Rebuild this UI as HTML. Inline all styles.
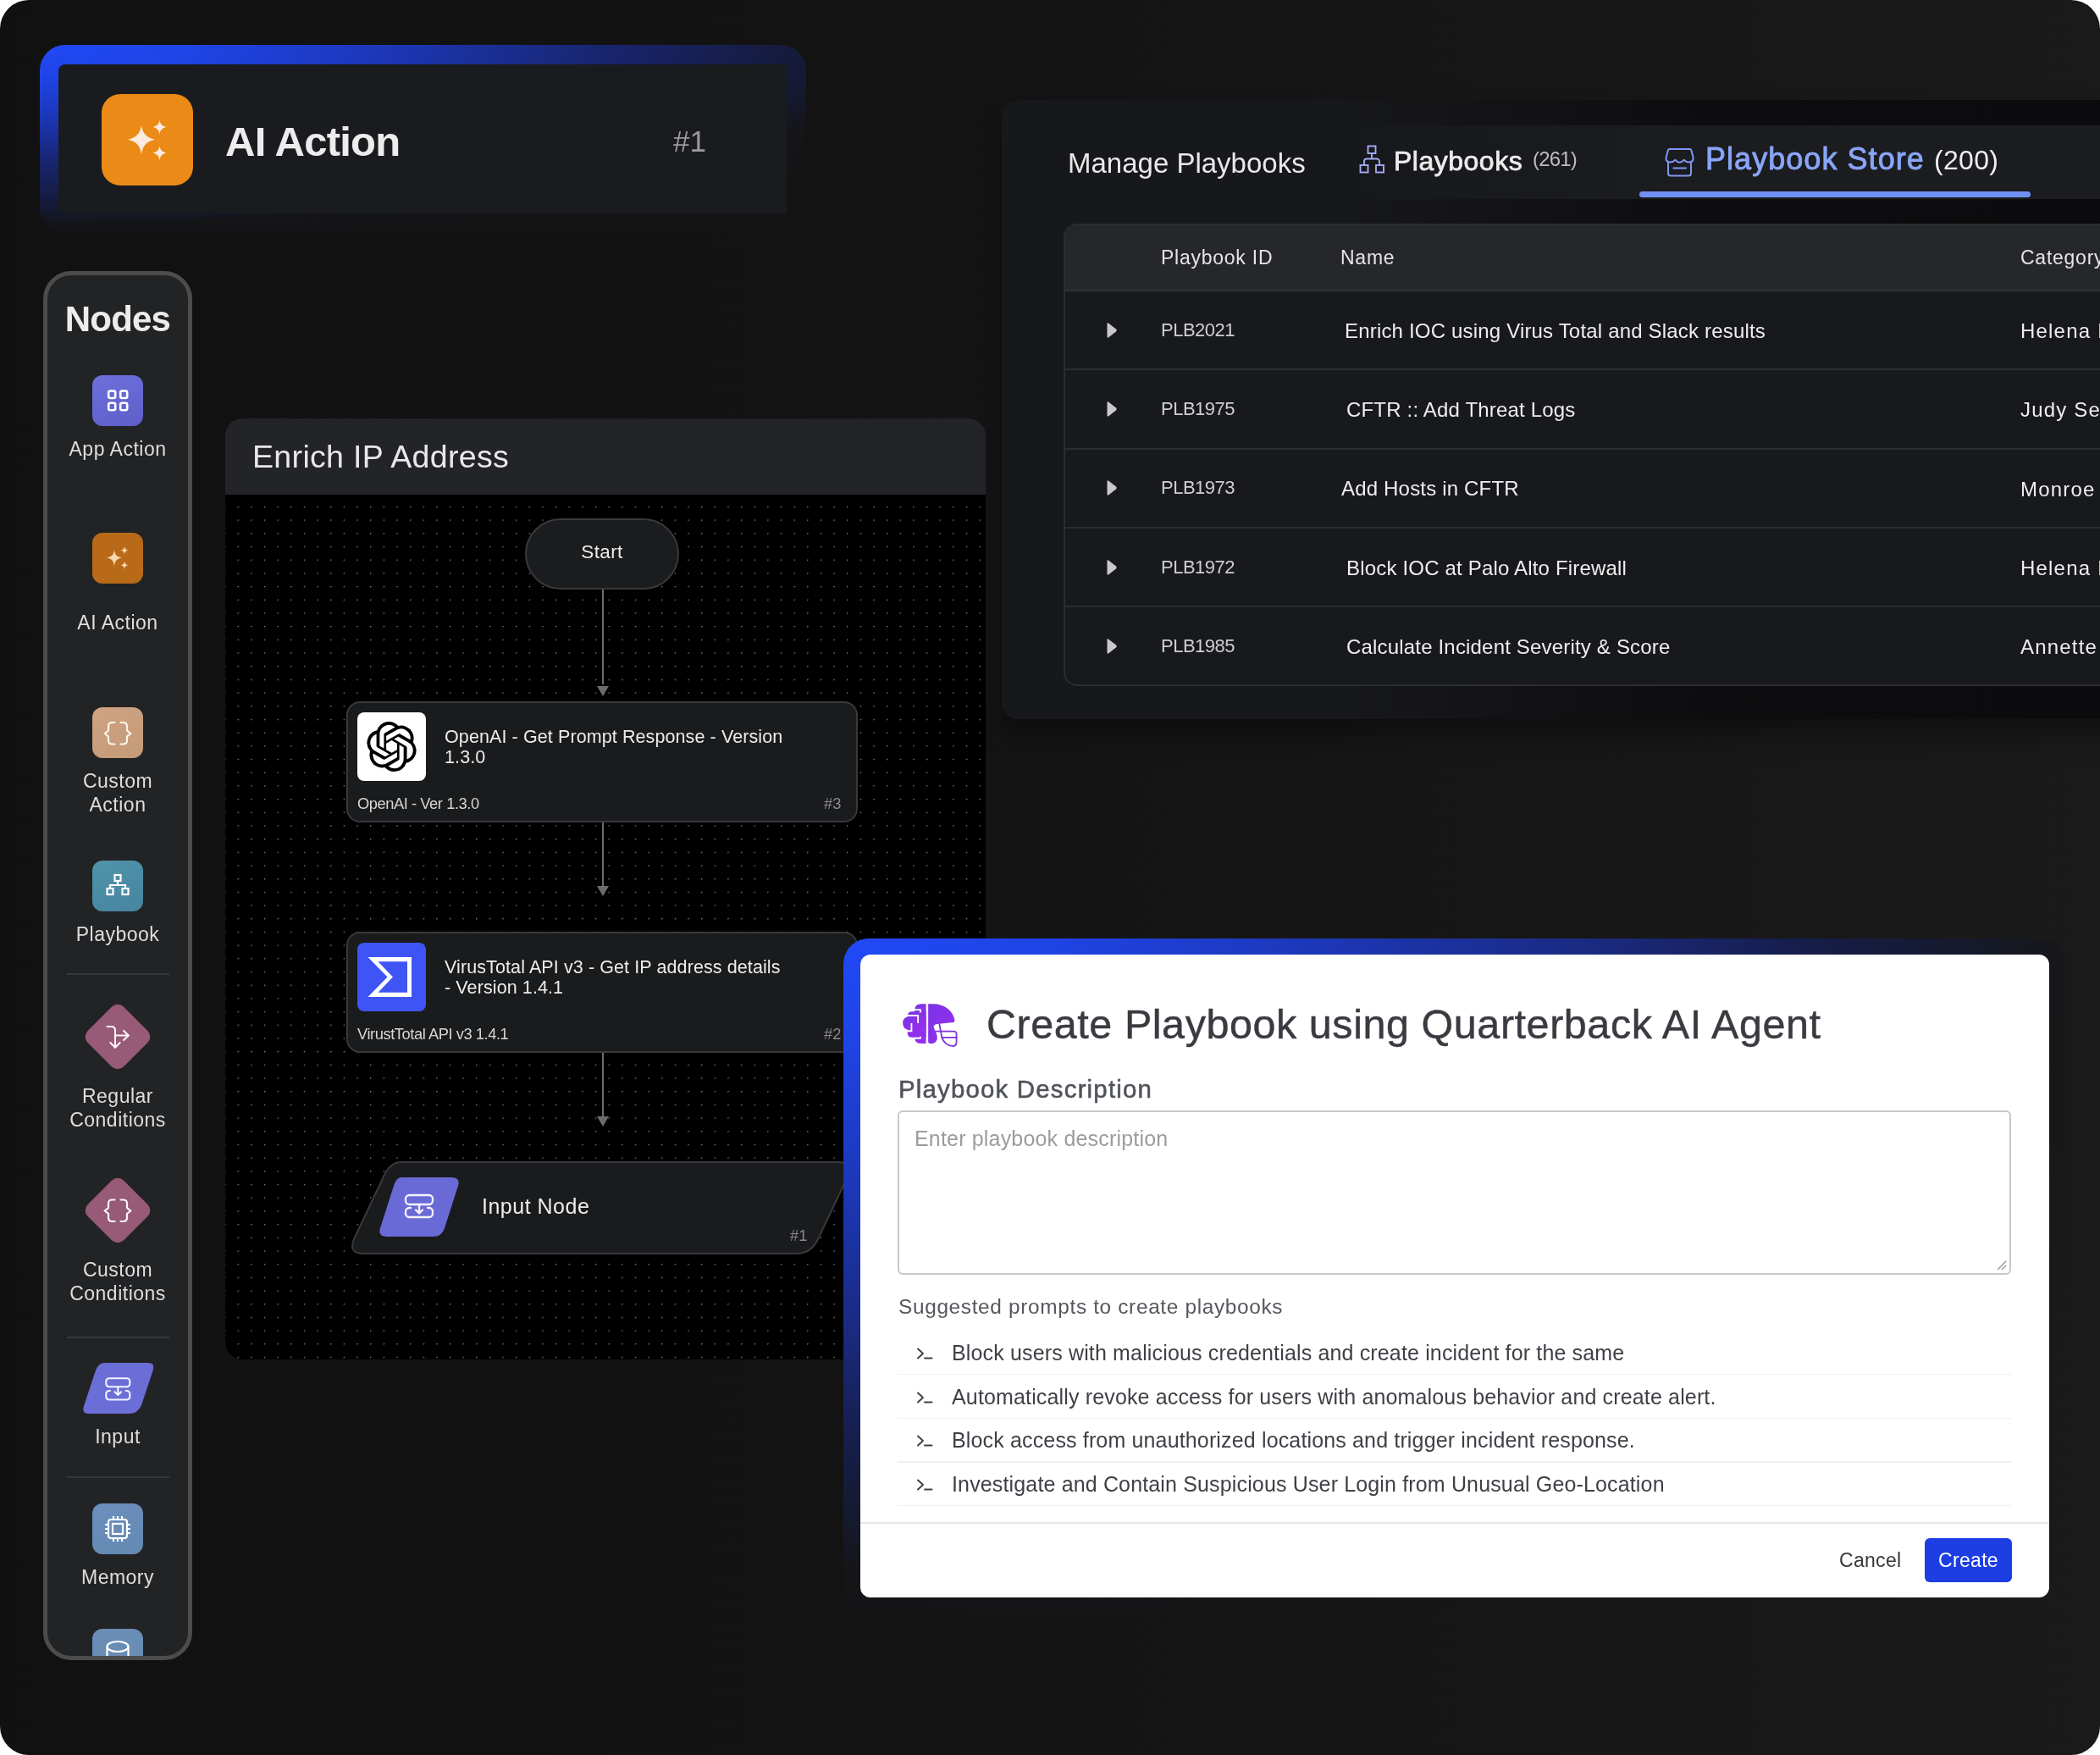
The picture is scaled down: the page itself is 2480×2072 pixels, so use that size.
<!DOCTYPE html>
<html><head><meta charset="utf-8">
<style>
*{box-sizing:border-box;margin:0;padding:0}
html,body{width:2480px;height:2072px;background:#fff;overflow:hidden}
body{font-family:"Liberation Sans",sans-serif;position:relative;-webkit-font-smoothing:antialiased}
.t,.lbl,.th,.pid,.pnm,.ntitle,.nfoot,.nhash,.mi{will-change:transform}
.page{position:absolute;left:0;top:0;width:2480px;height:2072px;border-radius:34px;overflow:hidden;
 background:linear-gradient(90deg,#111111 0%,#121212 25%,#141414 50%,#171717 75%,#1a1a1a 100%)}
.a{position:absolute}
.t{position:absolute;line-height:1;white-space:nowrap}
/* AI action card */
#aiframe{left:47px;top:53px;width:905px;height:222px;border-radius:30px;
 background:radial-gradient(ellipse 905px 189px at 0 0,#2149f6 0%,#1f44e6 20%,#1c37b8 45%,#18246a 75%,#151a38 100%,rgba(21,22,26,.75) 112%,rgba(20,21,22,.3) 130%)}
#aicard{left:69px;top:76px;width:860px;height:176px;border-radius:8px 3px 2px 8px;background:#1a1b1e}
#aiicon{left:120px;top:111px;width:108px;height:108px;border-radius:22px;background:#eb8a17}
/* sidebar */
#side{left:51px;top:320px;width:176px;height:1640px;border:5px solid #4c4c4c;border-radius:33px;background:#222325;overflow:hidden}
.nic{position:absolute;width:60px;height:60px;border-radius:12px}
.lbl{position:absolute;left:0;width:166px;text-align:center;color:#dedede;font-size:23px;letter-spacing:0.5px;line-height:28px;white-space:nowrap}
.div{position:absolute;left:23px;width:121px;height:2px;background:#37383b}

/* flow */
#flow{left:266px;top:494px;width:898px;height:1111px;border-radius:20px 20px 21px 21px;overflow:hidden;background:#000}
#flowhd{left:0;top:0;width:898px;height:90px;background:#232427}
#canvas{left:0;top:90px;width:898px;height:1021px;background-color:#000;
 background-image:radial-gradient(circle at 0.8px 0.8px,#808080 0.55px,transparent 0.95px);
 background-size:15.65px 15.7px;background-position:14.6px 13.8px}
.node{position:absolute;background:#1a1b1d;border:2px solid #38393c;border-radius:16px}
.ntitle{position:absolute;color:#ececec;font-size:21.5px;letter-spacing:0.1px;line-height:23.5px;white-space:nowrap}
.nfoot{position:absolute;color:#d6d6d6;font-size:18.3px;letter-spacing:-0.43px;line-height:1;white-space:nowrap}
.nhash{position:absolute;color:#8a8a8c;font-size:18.3px;line-height:1;white-space:nowrap}
.vline{position:absolute;width:2px;background:#6c6c6e}
.ahead{position:absolute;width:0;height:0;border-left:7.5px solid transparent;border-right:7.5px solid transparent;border-top:12px solid #6c6c6e}

/* playbooks panel */
#pbp{left:1183px;top:118px;width:1400px;height:731px;border-radius:20px;background:#17181b;overflow:hidden;box-shadow:0 18px 30px rgba(0,0,0,.35)}
#bandA{left:0;top:-4px;width:1400px;height:34px;background:linear-gradient(to right,rgba(11,11,13,0) 0%,rgba(11,11,13,0) 28%,rgba(11,11,13,.85) 60%,#0b0b0d 100%)}
#bandB{left:0;top:117px;width:1400px;height:29px;background:linear-gradient(to right,rgba(11,11,13,0) 0%,rgba(11,11,13,0) 28%,rgba(11,11,13,.85) 60%,#0b0b0d 100%)}
#bandC{left:0;top:691px;width:1400px;height:40px;background:linear-gradient(to right,rgba(11,11,13,0) 0%,rgba(11,11,13,0) 28%,rgba(11,11,13,.85) 60%,#0b0b0d 100%)}
#tabbar{left:0;top:30px;width:1400px;height:87px;background:linear-gradient(to right,rgba(28,29,32,0) 0%,rgba(28,29,32,0) 30%,#1b1c1f 55%,#1c1d20 100%)}
#tbl{left:1256px;top:264px;width:1300px;height:546px;border:2px solid #2c2d31;border-radius:16px;background:#18191c;overflow:hidden}
#thd{left:0;top:0;width:1300px;height:78px;background:#26272b;border-bottom:2px solid #303135}
.rsep{position:absolute;left:0;width:1300px;height:2px;background:#2c2d31}
.th{position:absolute;color:#e4e4e4;font-size:23px;letter-spacing:0.75px;line-height:1;white-space:nowrap}
.pid{position:absolute;color:#cfcfd1;font-size:22px;letter-spacing:-0.5px;line-height:1;white-space:nowrap}
.pnm{position:absolute;color:#eeeeee;font-size:24px;letter-spacing:0.18px;line-height:1;white-space:nowrap}
.pcat{letter-spacing:1.2px}
.tri{position:absolute;width:14px;height:20px}

/* modal */
#mframe{left:996px;top:1108px;width:1443px;height:799px;border-radius:30px;
 background:radial-gradient(ellipse 1300px 680px at 0 0,#2149f6 0%,#1f44e6 18%,#1c36b4 45%,#1a2a80 68%,#161d48 88%,#151a30 100%,rgba(21,22,26,.7) 110%,rgba(22,22,23,0) 128%)}
#modal{left:1016px;top:1127px;width:1404px;height:759px;border-radius:12px;background:#fff;overflow:hidden}
.mi{position:absolute;color:#3f3f46;font-size:25px;letter-spacing:0.15px;line-height:1;white-space:nowrap}
.msep{position:absolute;left:1060px;width:1316px;height:1.5px;background:#f0f0f0}
</style></head>
<body><div class="page">

<!-- AI Action card -->
<div id="aiframe" class="a"></div>
<div id="aicard" class="a"></div>
<div id="aiicon" class="a">
 <svg width="108" height="108" viewBox="0 0 108 108" style="position:absolute;left:0;top:0">
  <path fill="#fde9dd" d="M47 37 C48.5 46.5 53 51.5 63 53.7 C53 56 48.5 61 47 71 C45.5 61 41 56 31 53.7 C41 51.5 45.5 46.5 47 37Z"/>
  <path fill="#fde9dd" d="M68.5 30.5 C69.2 35.5 71.3 37.8 76.5 39 C71.3 40.3 69.2 42.5 68.5 48 C67.8 42.5 65.7 40.3 60.5 39 C65.7 37.8 67.8 35.5 68.5 30.5Z"/>
  <path fill="#fde9dd" d="M68.5 61 C69.2 66 71.3 68.3 76.5 69.5 C71.3 70.8 69.2 73 68.5 78.5 C67.8 73 65.7 70.8 60.5 69.5 C65.7 68.3 67.8 66 68.5 61Z"/>
 </svg>
</div>
<div class="t" style="left:266px;top:143px;font-size:49px;font-weight:bold;letter-spacing:-0.75px;color:#ececec">AI Action</div>
<div class="t" style="left:795px;top:149px;font-size:35px;color:#9a9a9c">#1</div>

<!-- Sidebar -->
<div id="side" class="a">
 <div class="t" style="left:0;width:166px;text-align:center;top:31px;font-size:42px;font-weight:bold;letter-spacing:-0.8px;color:#ececec">Nodes</div>
 <!-- App Action -->
 <div class="nic" style="left:53px;top:118px;background:linear-gradient(160deg,#6d70dc,#5e5ec8)">
  <svg width="60" height="60" viewBox="0 0 60 60"><g fill="none" stroke="#fff" stroke-width="2.6">
   <rect x="19.2" y="18.5" width="8" height="8.5" rx="2"/><rect x="33.2" y="18.5" width="8" height="8.5" rx="2"/>
   <rect x="19.2" y="32.7" width="8" height="8.5" rx="2"/><rect x="33.2" y="32.7" width="8" height="8.5" rx="2"/></g></svg>
 </div>
 <div class="lbl" style="top:191px">App Action</div>
 <!-- AI Action -->
 <div class="nic" style="left:53px;top:304px;background:#b86a18">
  <svg width="60" height="60" viewBox="0 0 60 60"><g fill="#fcd9ae">
  <path d="M26 20 C27 26.5 28.5 28 35 29.5 C28.5 31 27 32.5 26 39.5 C25 32.5 23.5 31 17 29.5 C23.5 28 25 26.5 26 20Z"/>
  <path d="M38 16 C38.6 19.3 39.4 20 42.5 20.7 C39.4 21.4 38.6 22.2 38 25.5 C37.4 22.2 36.6 21.4 33.5 20.7 C36.6 20 37.4 19.3 38 16Z"/>
  <path d="M38 33.5 C38.6 36.8 39.4 37.5 42.5 38.2 C39.4 38.9 38.6 39.7 38 43 C37.4 39.7 36.6 38.9 33.5 38.2 C36.6 37.5 37.4 36.8 38 33.5Z"/>
  </g></svg>
 </div>
 <div class="lbl" style="top:396px">AI Action</div>
 <!-- Custom Action -->
 <div class="nic" style="left:53px;top:510px;background:linear-gradient(160deg,#cfa383,#c39a78)">
  <svg width="60" height="60" viewBox="0 0 60 60"><g fill="none" stroke="#fff6ea" stroke-width="2.1" stroke-linecap="round" stroke-linejoin="miter">
  <path d="M26.5 18 H23.5 Q19 18 19 22.5 V27.5 L14.8 31 L19 34.5 V39 Q19 43.5 23.5 43.5 H26.5"/>
  <path d="M33.5 18 H36.5 Q41 18 41 22.5 V27.5 L45.2 31 L41 34.5 V39 Q41 43.5 36.5 43.5 H33.5"/>
  </g></svg>
 </div>
 <div class="lbl" style="top:583px">Custom<br>Action</div>
 <!-- Playbook -->
 <div class="nic" style="left:53px;top:691px;background:linear-gradient(160deg,#4f93aa,#4884a0)">
  <svg width="60" height="60" viewBox="0 0 60 60"><g fill="none" stroke="#fff" stroke-width="2.2">
  <rect x="26.5" y="17" width="7" height="7"/><rect x="17.5" y="33" width="7" height="7"/><rect x="35.5" y="33" width="7" height="7"/>
  <path d="M30 24 v5 M21 33 v-4 h18 v4"/></g></svg>
 </div>
 <div class="lbl" style="top:764px">Playbook</div>
 <div class="div" style="top:824px"></div>
 <!-- Regular conditions -->
 <div class="a" style="left:53px;top:869px;width:60px;height:60px;border-radius:10px;background:#975a77;transform:rotate(45deg)"></div>
 <svg class="a" style="left:53px;top:868px" width="60" height="60" viewBox="0 0 60 60"><g fill="none" stroke="#fff4f8" stroke-width="2.1" stroke-linecap="round" stroke-linejoin="round">
  <path d="M17.5 19 H22.5 Q27 19 27 23.5 V43.5"/><path d="M27 29.5 H42.5"/><path d="M37 24 L42.8 29.5 L37 35"/><path d="M21.3 38 L27 43.8 L32.7 38"/></g></svg>
 <div class="lbl" style="top:955px">Regular<br>Conditions</div>
 <!-- Custom conditions -->
 <div class="a" style="left:53px;top:1074px;width:60px;height:60px;border-radius:10px;background:#975a77;transform:rotate(45deg)"></div>
 <svg class="a" style="left:53px;top:1074px" width="60" height="60" viewBox="0 0 60 60"><g fill="none" stroke="#fff4f8" stroke-width="2.2" stroke-linecap="round" stroke-linejoin="miter">
  <path d="M26.5 17.5 H23.5 Q19 17.5 19 22 V27 L14.8 30.5 L19 34 V38.5 Q19 43 23.5 43 H26.5"/>
  <path d="M33.5 17.5 H36.5 Q41 17.5 41 22 V27 L45.2 30.5 L41 34 V38.5 Q41 43 36.5 43 H33.5"/>
  </g></svg>
 <div class="lbl" style="top:1160px">Custom<br>Conditions</div>
 <div class="div" style="top:1253px"></div>
 <!-- Input -->
 <svg class="a" style="left:41px;top:1284px" width="84" height="60" viewBox="0 0 84 60">
  <path d="M27 0 H78 Q86 0 84 8 L70 50 Q66 60 55 60 H8 Q-1 60 2 51 L16 9 Q19 0 27 0Z" fill="#6a6ed6"/>
  <g fill="none" stroke="#f4f2ff" stroke-width="2.1" stroke-linecap="round" stroke-linejoin="round">
  <rect x="28.3" y="18.3" width="28" height="10" rx="3.5"/><path d="M33 33 h-1.2 a3.5 3.5 0 0 0 -3.5 3.5 v3.5 a3.5 3.5 0 0 0 3.5 3.5 h21 a3.5 3.5 0 0 0 3.5 -3.5 v-3.5 a3.5 3.5 0 0 0 -3.5 -3.5 h-1.2"/>
  <path d="M42.3 28.5 v9.5 M38.5 34.3 l3.8 3.7 l3.8 -3.7"/></g></svg>
 <div class="lbl" style="top:1357px">Input</div>
 <div class="div" style="top:1418px"></div>
 <!-- Memory -->
 <div class="nic" style="left:53px;top:1450px;background:linear-gradient(160deg,#6c8fbb,#6389b2)">
  <svg width="60" height="60" viewBox="0 0 60 60"><g fill="none" stroke="#fff" stroke-width="2.2">
  <rect x="19" y="19" width="22" height="22" rx="3"/><rect x="24" y="24" width="12" height="12"/>
  <path d="M25 19 v-4 M30 19 v-4 M35 19 v-4 M25 41 v4 M30 41 v4 M35 41 v4 M19 25 h-4 M19 30 h-4 M19 35 h-4 M41 25 h4 M41 30 h4 M41 35 h4"/></g></svg>
 </div>
 <div class="lbl" style="top:1523px">Memory</div>
 <!-- DB -->
 <div class="nic" style="left:53px;top:1598px;background:#6a8db5">
  <svg width="60" height="60" viewBox="0 0 60 60"><g fill="none" stroke="#fff" stroke-width="2.2">
  <ellipse cx="30" cy="21" rx="12.5" ry="6"/><path d="M17.5 21 v20 M42.5 21 v20"/></g></svg>
 </div>
</div>

<!-- Playbooks panel -->
<div id="pbp" class="a">
 <div id="bandA" class="a"></div>
 <div id="tabbar" class="a"></div>
 <div id="bandB" class="a"></div>
 <div id="bandC" class="a"></div>
</div>
<div class="t" style="left:1261px;top:176.1px;font-size:33px;color:#e8e8e8">Manage Playbooks</div>
<svg class="a" style="left:1604px;top:171px" width="32" height="34" viewBox="0 0 32 34"><g fill="none" stroke="#a3aaf2" stroke-width="1.9">
 <rect x="11.5" y="1.5" width="9" height="8.5"/><rect x="2.5" y="24" width="9" height="8.5"/><rect x="21" y="24" width="9" height="8.5"/>
 <path d="M16 10 v6.5 M7 24 v-4.5 a3 3 0 0 1 3 -3 h12 a3 3 0 0 1 3 3 v4.5"/></g></svg>
<div class="t" style="left:1646px;top:173.6px;font-size:32px;letter-spacing:0.5px;-webkit-text-stroke:0.75px #ececec;color:#ececec">Playbooks</div>
<div class="t" style="left:1810px;top:176.4px;font-size:24px;letter-spacing:-0.8px;color:#bcbcbe">(261)</div>
<svg class="a" style="left:1965px;top:173px" width="37" height="37" viewBox="0 0 37 37"><g fill="none" stroke="#7f97f2" stroke-width="2" stroke-linejoin="round" stroke-linecap="round">
 <path d="M6.5 3 H30.5 Q32 3 32.4 4.5 L34.6 13 Q35 18 30 18.6 Q26.5 18.8 23.5 15.8 Q21 18.8 18.5 18.8 Q16 18.8 13.5 15.8 Q10.5 18.8 7 18.6 Q2 18 2.6 13 L4.9 4.5 Q5.3 3 6.5 3 Z"/>
 <path d="M5 18.6 V31.6 Q5 34.6 8 34.6 H29 Q32 34.6 32 31.6 V18.6"/>
 <path d="M11.3 25.4 H26"/></g></svg>
<div class="t" style="left:2014px;top:170.0px;font-size:36px;letter-spacing:1.05px;-webkit-text-stroke:0.9px #8aa5f8;color:#8aa5f8">Playbook Store</div>
<div class="t" style="left:2284px;top:173.4px;font-size:32px;letter-spacing:0.3px;color:#eeeeee">(200)</div>
<div class="a" style="left:1936px;top:226px;width:462px;height:7px;border-radius:4px;background:#7090f3"></div>
<!-- table -->
<div id="tbl" class="a">
 <div id="thd" class="a"></div>
<div class="th" style="left:113px;top:26.5px">Playbook ID</div>
<div class="th" style="left:325px;top:26.5px">Name</div>
<div class="th" style="left:1128px;top:26.5px">Category</div>
<svg class="tri" style="left:48px;top:113.7px" viewBox="0 0 14 20"><path d="M1.5 2.5 Q1.5 0.5 3.3 1.7 L12 8.4 Q13.6 10 12 11.6 L3.3 18.3 Q1.5 19.5 1.5 17.5Z" fill="#c9c9cb"/></svg>
<div class="pid" style="left:113px;top:112.7px">PLB2021</div>
<div class="pnm" style="left:330px;top:112.6px">Enrich IOC using Virus Total and Slack results</div>
<div class="pnm pcat" style="left:1128px;top:113.0px">Helena Ivy</div>
<div class="rsep" style="top:169.4px"></div>
<svg class="tri" style="left:48px;top:207.1px" viewBox="0 0 14 20"><path d="M1.5 2.5 Q1.5 0.5 3.3 1.7 L12 8.4 Q13.6 10 12 11.6 L3.3 18.3 Q1.5 19.5 1.5 17.5Z" fill="#c9c9cb"/></svg>
<div class="pid" style="left:113px;top:206.0px">PLB1975</div>
<div class="pnm" style="left:332px;top:205.9px">CFTR :: Add Threat Logs</div>
<div class="pnm pcat" style="left:1128px;top:206.3px">Judy Sean</div>
<div class="rsep" style="top:262.7px"></div>
<svg class="tri" style="left:48px;top:300.4px" viewBox="0 0 14 20"><path d="M1.5 2.5 Q1.5 0.5 3.3 1.7 L12 8.4 Q13.6 10 12 11.6 L3.3 18.3 Q1.5 19.5 1.5 17.5Z" fill="#c9c9cb"/></svg>
<div class="pid" style="left:113px;top:299.4px">PLB1973</div>
<div class="pnm" style="left:326px;top:299.3px">Add Hosts in CFTR</div>
<div class="pnm pcat" style="left:1128px;top:299.7px">Monroe Lee</div>
<div class="rsep" style="top:356.0px"></div>
<svg class="tri" style="left:48px;top:393.8px" viewBox="0 0 14 20"><path d="M1.5 2.5 Q1.5 0.5 3.3 1.7 L12 8.4 Q13.6 10 12 11.6 L3.3 18.3 Q1.5 19.5 1.5 17.5Z" fill="#c9c9cb"/></svg>
<div class="pid" style="left:113px;top:392.7px">PLB1972</div>
<div class="pnm" style="left:332px;top:392.6px">Block IOC at Palo Alto Firewall</div>
<div class="pnm pcat" style="left:1128px;top:393.0px">Helena Ivy</div>
<div class="rsep" style="top:449.4px"></div>
<svg class="tri" style="left:48px;top:487.1px" viewBox="0 0 14 20"><path d="M1.5 2.5 Q1.5 0.5 3.3 1.7 L12 8.4 Q13.6 10 12 11.6 L3.3 18.3 Q1.5 19.5 1.5 17.5Z" fill="#c9c9cb"/></svg>
<div class="pid" style="left:113px;top:486.1px">PLB1985</div>
<div class="pnm" style="left:332px;top:486.0px">Calculate Incident Severity &amp; Score</div>
<div class="pnm pcat" style="left:1128px;top:486.4px">Annette Ray</div>
</div>

<!-- Flow panel -->
<div id="flow" class="a">
 <div id="flowhd" class="a"></div>
 <div id="canvas" class="a"></div>
</div>
<div class="t" style="left:298px;top:521px;font-size:37.6px;letter-spacing:0.3px;color:#e8e8e8">Enrich IP Address</div>
<!-- start -->
<div class="a" style="left:620px;top:612px;width:182px;height:84px;border-radius:42px;background:#1b1c1e;border:2px solid #38393c"></div>
<div class="t" style="left:620px;width:182px;text-align:center;top:641px;font-size:22.5px;letter-spacing:0.4px;color:#ececec">Start</div>
<div class="vline" style="left:711px;top:696px;height:112px"></div>
<div class="ahead" style="left:704.5px;top:809.5px"></div>
<!-- openai node -->
<div class="node" style="left:409px;top:828px;width:604px;height:143px"></div>
<div class="a" style="left:422px;top:841px;width:81px;height:81px;border-radius:8px;background:#fff"></div>
<svg class="a" style="left:433px;top:852px" width="59" height="59" viewBox="0 0 24 24"><path fill="#000" d="M22.282 9.821a5.985 5.985 0 0 0-.516-4.91 6.046 6.046 0 0 0-6.51-2.9A6.065 6.065 0 0 0 4.981 4.18a5.985 5.985 0 0 0-3.998 2.9 6.046 6.046 0 0 0 .743 7.097 5.98 5.98 0 0 0 .51 4.911 6.051 6.051 0 0 0 6.515 2.9A5.985 5.985 0 0 0 13.26 24a6.056 6.056 0 0 0 5.772-4.206 5.99 5.99 0 0 0 3.997-2.9 6.056 6.056 0 0 0-.747-7.073zM13.26 22.43a4.476 4.476 0 0 1-2.876-1.04l.141-.081 4.779-2.758a.795.795 0 0 0 .392-.681v-6.737l2.02 1.168a.071.071 0 0 1 .038.052v5.583a4.504 4.504 0 0 1-4.494 4.494zM3.6 18.304a4.47 4.47 0 0 1-.535-3.014l.142.085 4.783 2.759a.771.771 0 0 0 .78 0l5.843-3.369v2.332a.08.08 0 0 1-.033.062L9.74 19.95a4.5 4.5 0 0 1-6.14-1.646zM2.34 7.896a4.485 4.485 0 0 1 2.366-1.973V11.6a.766.766 0 0 0 .388.676l5.815 3.355-2.02 1.168a.076.076 0 0 1-.071 0l-4.83-2.786A4.504 4.504 0 0 1 2.34 7.872zm16.597 3.855l-5.833-3.387L15.119 7.2a.076.076 0 0 1 .071 0l4.83 2.791a4.494 4.494 0 0 1-.676 8.105v-5.678a.79.79 0 0 0-.407-.667zm2.01-3.023l-.141-.085-4.774-2.782a.776.776 0 0 0-.785 0L9.409 9.23V6.897a.066.066 0 0 1 .028-.061l4.83-2.787a4.5 4.5 0 0 1 6.68 4.66zm-12.64 4.135l-2.02-1.164a.08.08 0 0 1-.038-.057V6.075a4.5 4.5 0 0 1 7.375-3.453l-.142.08L8.704 5.46a.795.795 0 0 0-.393.681zm1.097-2.365l2.602-1.5 2.607 1.5v2.999l-2.597 1.5-2.607-1.5z"/></svg>
<div class="ntitle" style="left:524.5px;top:859.0px">OpenAI - Get Prompt Response - Version<br>1.3.0</div>
<div class="nfoot" style="left:422px;top:940.3px">OpenAI - Ver 1.3.0</div>
<div class="nhash" style="left:972.5px;top:940.3px">#3</div>
<div class="vline" style="left:711px;top:971px;height:75px"></div>
<div class="ahead" style="left:704.5px;top:1045.5px"></div>
<!-- virustotal node -->
<div class="node" style="left:409px;top:1100px;width:604px;height:143px"></div>
<div class="a" style="left:422px;top:1113px;width:81px;height:81px;border-radius:8px;background:#3e54f4"></div>
<svg class="a" style="left:422px;top:1113px" width="81" height="81" viewBox="0 0 81 81"><path fill="#fff" fill-rule="evenodd" d="M12.5 17 H64 V64 H12.5 L35.5 40.5 Z M24.5 22.3 L42 40.5 L24.5 58.7 H59 V22.3 Z"/></svg>
<div class="ntitle" style="left:524.5px;top:1131.2px">VirusTotal API v3 - Get IP address details<br>- Version 1.4.1</div>
<div class="nfoot" style="left:422px;top:1212.0px">VirustTotal API v3 1.4.1</div>
<div class="nhash" style="left:972.5px;top:1212.0px">#2</div>
<div class="vline" style="left:711px;top:1243px;height:75px"></div>
<div class="ahead" style="left:704.5px;top:1318px"></div>
<!-- input node -->
<svg class="a" style="left:405px;top:1370px" width="606" height="112" viewBox="0 0 606 112">
 <path d="M68 2 H585 Q603 2 596 19 L561 93 Q553 110 535 110 H24 Q6 110 13 93 L48 19 Q56 2 68 2Z" fill="#1a1b1d" stroke="#38393c" stroke-width="2"/>
</svg>
<svg class="a" style="left:447px;top:1390px" width="96" height="70" viewBox="0 0 96 70">
 <path d="M27 0 H86 Q97 0 94 10 L78 60 Q75 70 64 70 H10 Q-1 70 2 60 L18 10 Q21 0 27 0Z" fill="#6a6ad6"/>
 <g fill="none" stroke="#f4f2ff" stroke-width="2.3" stroke-linecap="round" stroke-linejoin="round">
  <rect x="32" y="21" width="32" height="11" rx="4.5"/><path d="M38 36 h-1.5 a4.5 4.5 0 0 0 -4.5 4.5 v2 a4.5 4.5 0 0 0 4.5 4.5 h23 a4.5 4.5 0 0 0 4.5 -4.5 v-2 a4.5 4.5 0 0 0 -4.5 -4.5 h-1.5"/>
  <path d="M48 32 v10 M44 38.5 l4 4 l4 -4"/></g>
</svg>
<div class="t" style="left:569px;top:1411.8px;font-size:25px;letter-spacing:0.5px;color:#ececec">Input Node</div>
<div class="nhash" style="left:933px;top:1449.5px">#1</div>

<!-- Modal -->
<div id="mframe" class="a"></div>
<div id="modal" class="a"></div>
<svg class="a" style="left:1055px;top:1175px" width="90" height="70" viewBox="0 0 2100 1633">
 <defs><linearGradient id="hg" x1="0" y1="0" x2="1" y2="1"><stop offset="0" stop-color="#7a33e6"/><stop offset="1" stop-color="#9a2ef0"/></linearGradient></defs>
 <g fill="url(#hg)">
  <path d="M900 240 H770 Q600 240 590 390 V1190 Q600 1330 770 1330 H900Z"/>
  <path d="M900 450 H520 Q390 450 390 580 V1030 Q390 1160 520 1160 H900Z"/>
  <path d="M900 590 H450 Q260 590 260 770 Q260 950 450 950 H900Z"/>
  <path d="M960 240 H1100 C1400 240 1640 420 1690 680 C1700 730 1660 750 1600 755 L1250 790 C1160 800 1100 830 1115 880 C1130 950 1220 1080 1210 1180 C1200 1290 1120 1335 1050 1335 C1000 1335 960 1320 960 1290Z"/>
 </g>
 <g fill="none" stroke="#fff" stroke-width="44" stroke-linecap="butt">
  <path d="M560 400 H745 V480"/><path d="M370 560 H680 V770"/><path d="M370 985 H500 V770"/><path d="M570 1185 H745 V1140"/>
 </g>
 <g fill="none" stroke="#7d33d6" stroke-width="42" stroke-linejoin="round" stroke-linecap="round">
  <path d="M1268 790 L1335 1150 C1380 1320 1520 1400 1640 1400 C1710 1400 1740 1360 1740 1290 V1070 C1740 1020 1710 995 1650 995 H1165"/>
  <path d="M1340 1165 H1740"/>
 </g>
</svg>
<div class="t" style="left:1165px;top:1185.3px;font-size:48.5px;letter-spacing:0.55px;-webkit-text-stroke:0.45px #3a3b41;color:#3a3b41">Create Playbook using Quarterback AI Agent</div>
<div class="t" style="left:1061px;top:1271.1px;font-size:29.4px;letter-spacing:1.2px;-webkit-text-stroke:0.55px #50535a;color:#50535a">Playbook Description</div>
<div class="a" style="left:1060px;top:1311px;width:1315px;height:194px;border:2px solid #c8c8ca;border-radius:6px;background:#fff"></div>
<svg class="a" style="left:2356px;top:1486px" width="14" height="14" viewBox="0 0 14 14"><path d="M13 3 L3 13 M13 8 L8 13" stroke="#9a9a9a" stroke-width="1.5"/></svg>
<div class="t" style="left:1080px;top:1332.4px;font-size:25px;letter-spacing:0.18px;color:#9c9ca0">Enter playbook description</div>
<div class="t" style="left:1061px;top:1530.7px;font-size:24.4px;letter-spacing:0.66px;color:#56575d">Suggested prompts to create playbooks</div>
<svg class="a" style="left:1082px;top:1590px" width="20" height="16" viewBox="0 0 20 16"><path d="M2 2.5 L8 8 L2 13.5" fill="none" stroke="#3f3f46" stroke-width="1.9" stroke-linecap="round" stroke-linejoin="round"/><path d="M10 13.5 H18.5" stroke="#3f3f46" stroke-width="1.9" stroke-linecap="round"/></svg>
<div class="mi" style="left:1124px;top:1584.8px">Block users with malicious credentials and create incident for the same</div>
<div class="msep" style="top:1621.7px"></div>
<svg class="a" style="left:1082px;top:1641.7px" width="20" height="16" viewBox="0 0 20 16"><path d="M2 2.5 L8 8 L2 13.5" fill="none" stroke="#3f3f46" stroke-width="1.9" stroke-linecap="round" stroke-linejoin="round"/><path d="M10 13.5 H18.5" stroke="#3f3f46" stroke-width="1.9" stroke-linecap="round"/></svg>
<div class="mi" style="left:1124px;top:1636.5px">Automatically revoke access for users with anomalous behavior and create alert.</div>
<div class="msep" style="top:1673.8px"></div>
<svg class="a" style="left:1082px;top:1693px" width="20" height="16" viewBox="0 0 20 16"><path d="M2 2.5 L8 8 L2 13.5" fill="none" stroke="#3f3f46" stroke-width="1.9" stroke-linecap="round" stroke-linejoin="round"/><path d="M10 13.5 H18.5" stroke="#3f3f46" stroke-width="1.9" stroke-linecap="round"/></svg>
<div class="mi" style="left:1124px;top:1687.8px">Block access from unauthorized locations and trigger incident response.</div>
<div class="msep" style="top:1725px"></div>
<svg class="a" style="left:1082px;top:1745px" width="20" height="16" viewBox="0 0 20 16"><path d="M2 2.5 L8 8 L2 13.5" fill="none" stroke="#3f3f46" stroke-width="1.9" stroke-linecap="round" stroke-linejoin="round"/><path d="M10 13.5 H18.5" stroke="#3f3f46" stroke-width="1.9" stroke-linecap="round"/></svg>
<div class="mi" style="left:1124px;top:1739.8px">Investigate and Contain Suspicious User Login from Unusual Geo-Location</div>
<div class="msep" style="top:1776.7px"></div>
<div class="a" style="left:1016px;top:1797px;width:1404px;height:2px;background:#e6e6e8"></div>
<div class="t" style="left:2172px;top:1830.5px;font-size:23px;letter-spacing:0.3px;color:#38383c">Cancel</div>
<div class="a" style="left:2273px;top:1816px;width:103px;height:52px;border-radius:6px;background:#1c3ee2"></div>
<div class="t" style="left:2273px;width:103px;text-align:center;top:1830.5px;font-size:23px;letter-spacing:0.3px;color:#fff">Create</div>

</div></body></html>
